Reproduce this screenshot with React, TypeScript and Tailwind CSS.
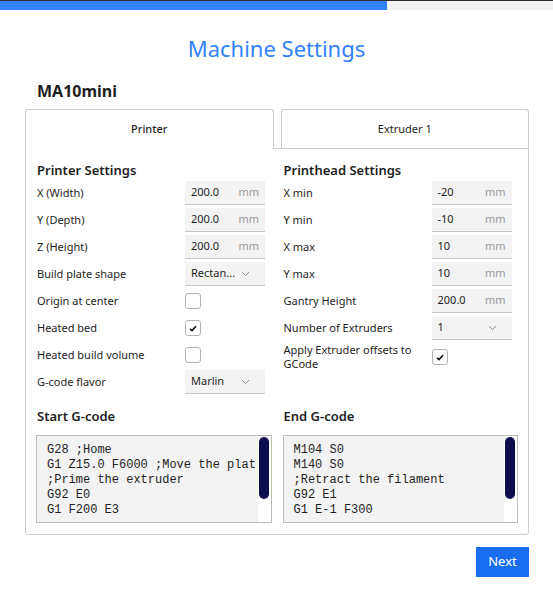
const sans = { fontFamily: '"Noto Sans", "Open Sans", sans-serif' };

function Chevron() {
  return (
    <svg width="9" height="6" viewBox="0 0 9 6" className="shrink-0">
      <path d="M1 1.2 L4.5 4.6 L8 1.2" fill="none" stroke="#8a8a8a" strokeWidth="1" />
    </svg>
  );
}

function NumField({ value, unit }: { value: string; unit: string }) {
  return (
    <div className="w-[80px] h-[24px] bg-[#f3f3f3] border-b border-[#c6c6c6] flex items-center pl-[6px] pr-[6px] text-[11px]">
      <span className="flex-1 text-[#1e1e1e]">{value}</span>
      <span className="text-[#9b9b9b]">{unit}</span>
    </div>
  );
}

function Select({ value }: { value: string }) {
  return (
    <div className="w-[80px] h-[24px] bg-[#f3f3f3] border-b border-[#c6c6c6] flex items-center pl-[6px] pr-[15px] text-[11px]">
      <span className="flex-1 text-[#1e1e1e]">{value}</span>
      <Chevron />
    </div>
  );
}

function Check({ checked }: { checked?: boolean }) {
  return (
    <div className="w-[16px] h-[16px] rounded-[3px] border border-[#b3b3b3] bg-white flex items-center justify-center">
      {checked && (
        <svg width="8" height="7" viewBox="0 0 8 7">
          <path d="M1 3.8 L3 5.6 L7 1.2" fill="none" stroke="#111" strokeWidth="1.7" />
        </svg>
      )}
    </div>
  );
}

type Row = { label: string; kind: "num" | "select" | "check"; value?: string; checked?: boolean };

const printer: Row[] = [
  { label: "X (Width)", kind: "num", value: "200.0" },
  { label: "Y (Depth)", kind: "num", value: "200.0" },
  { label: "Z (Height)", kind: "num", value: "200.0" },
  { label: "Build plate shape", kind: "select", value: "Rectan..." },
  { label: "Origin at center", kind: "check" },
  { label: "Heated bed", kind: "check", checked: true },
  { label: "Heated build volume", kind: "check" },
  { label: "G-code flavor", kind: "select", value: "Marlin" },
];

const printhead: Row[] = [
  { label: "X min", kind: "num", value: "-20" },
  { label: "Y min", kind: "num", value: "-10" },
  { label: "X max", kind: "num", value: "10" },
  { label: "Y max", kind: "num", value: "10" },
  { label: "Gantry Height", kind: "num", value: "200.0" },
  { label: "Number of Extruders", kind: "select", value: "1" },
  { label: "Apply Extruder offsets to GCode", kind: "check", checked: true },
];

function Section({ title, rows }: { title: string; rows: Row[] }) {
  return (
    <div>
      <h3 className="h-[18px] leading-[18px] text-[13px] font-semibold text-[#1e1e1e] pl-[1px] mb-[2px]">{title}</h3>
      <div className="flex flex-col gap-[3px]">
        {rows.map((r) => (
          <div key={r.label} className="flex items-center min-h-[24px]">
            <div className="w-[149px] pl-[1px] pr-[6px] text-[11px] leading-[14px] text-[#1e1e1e]">{r.label}</div>
            {r.kind === "num" && <NumField value={r.value!} unit="mm" />}
            {r.kind === "select" && <Select value={r.value!} />}
            {r.kind === "check" && <Check checked={r.checked} />}
          </div>
        ))}
      </div>
    </div>
  );
}

function Code({ title, lines }: { title: string; lines: string[] }) {
  return (
    <div>
      <h3 className="h-[18px] leading-[18px] text-[13px] font-semibold text-[#1e1e1e] pl-[1px] mb-[10px]">{title}</h3>
      <div className="h-[88px] border border-[#bdbdbd] bg-[#f3f3f3] flex">
        <pre
          className="flex-1 overflow-hidden whitespace-pre pl-[10px] pt-[7px] text-[12px] leading-[15px] text-[#1e1e1e]"
          style={{ fontFamily: '"Liberation Mono", monospace' }}
        >
          {lines.join("\n")}
        </pre>
        <div className="w-[13px] bg-white pt-[1px] pb-[23px] pl-[1px] pr-[2px] flex">
          <div className="flex-1 rounded-full bg-[#0d0c4e]" />
        </div>
      </div>
    </div>
  );
}

export default function App() {
  return (
    <div className="w-full h-[601px] bg-white flex flex-col" style={sans}>
      <div className="h-[1px] bg-[#2e2e2e]" />
      <div className="h-[9px] bg-[#f3f3f3] flex">
        <div className="w-[387px] bg-[#3282ff]" />
      </div>

      <h1 className="mt-[23px] h-[30px] leading-[30px] text-center text-[22px] text-[#3282ff]">Machine Settings</h1>

      <div className="pl-[25px] pr-[24px] flex flex-col">
        <h2 className="mt-[18px] h-[20px] leading-[20px] pl-[12px] text-[16px] font-bold text-[#1e1e1e]">MA10mini</h2>

        <div className="mt-[8px] flex gap-[7px] items-end">
          <div className="flex-1 h-[40px] -mb-[1px] relative z-10 bg-white border border-b-0 border-[#cdcdcd] rounded-t-[3px] flex items-center justify-center text-[11px] font-medium text-[#1e1e1e]">
            Printer
          </div>
          <div className="flex-1 h-[39px] bg-white border border-b-0 border-[#cdcdcd] rounded-t-[3px] flex items-center justify-center text-[11px] text-[#1e1e1e]">
            Extruder 1
          </div>
        </div>

        <div className="border border-[#cdcdcd] rounded-b-[3px] px-[10px] pt-[12px] pb-[11px]">
          <div className="grid grid-cols-2 gap-x-[11px] items-start">
            <Section title="Printer Settings" rows={printer} />
            <Section title="Printhead Settings" rows={printhead} />
          </div>
          <div className="mt-[13px] grid grid-cols-2 gap-x-[11px]">
            <Code
              title="Start G-code"
              lines={["G28 ;Home", "G1 Z15.0 F6000 ;Move the plat", ";Prime the extruder", "G92 E0", "G1 F200 E3"]}
            />
            <Code title="End G-code" lines={["M104 S0", "M140 S0", ";Retract the filament", "G92 E1", "G1 E-1 F300"]} />
          </div>
        </div>

        <div className="mt-[12px] flex justify-end">
          <button className="w-[53px] h-[30px] bg-[#196ef0] text-white text-[13px]">Next</button>
        </div>
      </div>
    </div>
  );
}
